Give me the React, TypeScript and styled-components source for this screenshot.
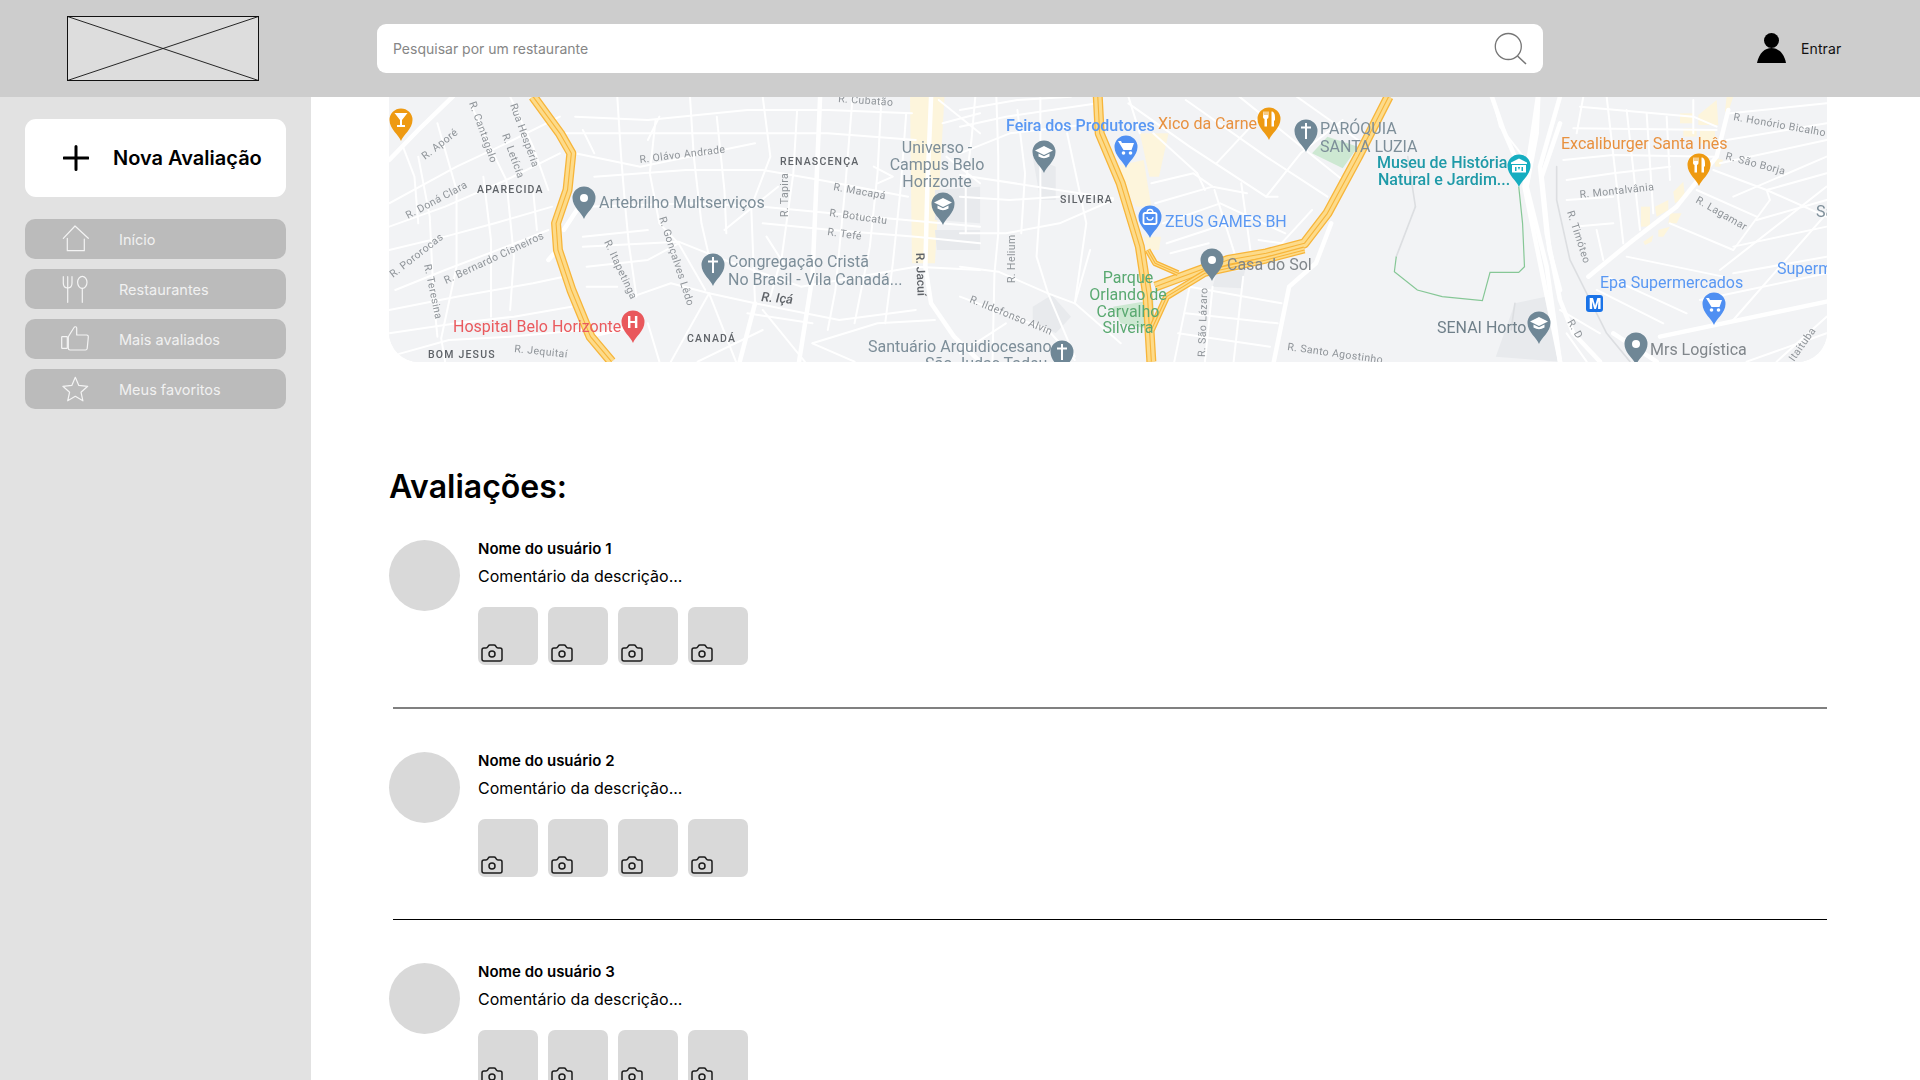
import React from "react";
import styled, { createGlobalStyle } from "styled-components";
import { Camera } from "lucide-react";

const Global = createGlobalStyle`
  html, body { margin: 0; padding: 0; height: 1080px; overflow: hidden; background: #fff; }
  body { font-family: Inter, "Liberation Sans", sans-serif; color: #000; }
  * { box-sizing: border-box; }
`;

const Page = styled.div`
  width: 1920px;
  height: 1080px;
  display: flex;
  flex-direction: column;
  overflow: hidden;
`;

const Header = styled.header`
  flex: none;
  height: 97px;
  background: #cdcdcd;
  display: flex;
  align-items: center;
  padding-left: 67px;
`;

const Logo = styled.svg`
  flex: none;
  width: 192px;
  height: 65px;
  display: block;
`;

const SearchBox = styled.div`
  flex: none;
  width: 1166px;
  height: 49px;
  margin-left: 118px;
  background: #fff;
  border-radius: 9px;
  display: flex;
  align-items: center;
  justify-content: space-between;
  padding: 0 16px;
  font-size: 14px;
  color: #868686;
`;

const SearchIcon = styled.svg`
  width: 36px;
  height: 36px;
  flex: none;
`;

const UserArea = styled.div`
  flex: none;
  margin-left: 214px;
  display: flex;
  align-items: center;
  gap: 14px;
  font-size: 14px;
  letter-spacing: 0.1px;
  color: #111;
`;

const UserIcon = styled.svg`
  width: 30px;
  height: 32px;
  flex: none;
`;

const Body = styled.div`
  flex: 1;
  display: flex;
  min-height: 0;
`;

const Sidebar = styled.aside`
  flex: none;
  width: 311px;
  background: #e2e2e2;
  padding: 22px 25px;
  display: flex;
  flex-direction: column;
  gap: 10px;
`;

const NewButton = styled.div`
  height: 78px;
  margin-bottom: 12px;
  background: #fff;
  border-radius: 11px;
  display: flex;
  align-items: center;
  gap: 24px;
  padding-left: 38px;
  font-size: 20px;
  font-weight: 600;
`;

const PlusIcon = styled.svg`
  width: 26px;
  height: 26px;
  flex: none;
`;

const NavItem = styled.div`
  height: 40px;
  background: #bbbbbb;
  border-radius: 10px;
  display: flex;
  align-items: center;
  gap: 28px;
  padding-left: 36px;
  font-size: 14.5px;
  color: #f1f1f1;
`;

const NavIcon = styled.svg`
  width: 30px;
  height: 30px;
  flex: none;
  fill: none;
  stroke: #f4f4f4;
  stroke-width: 1.2;
  stroke-linejoin: round;
  stroke-linecap: round;
`;

const Main = styled.main`
  flex: 1;
  min-width: 0;
  padding: 0 93px 0 78px;
  overflow: hidden;
`;

const MapFrame = styled.div`
  width: 1438px;
  height: 265px;
  border-radius: 0 0 30px 30px;
  overflow: hidden;
  background: #f2f3f5;
`;

const MapSvg = styled.svg`
  display: block;
  width: 1438px;
  height: 265px;
  filter: blur(0.35px);
`;

const MapLabel = styled.text<{ $color: string; $size: number; $weight?: number; $spacing?: number; $italic?: boolean }>`
  font-family: Roboto, "Liberation Sans", sans-serif;
  fill: ${(p) => p.$color};
  font-size: ${(p) => p.$size}px;
  font-weight: ${(p) => p.$weight ?? 400};
  letter-spacing: ${(p) => p.$spacing ?? 0}px;
  font-style: ${(p) => (p.$italic ? "italic" : "normal")};
`;

const Title = styled.h2`
  margin: 105px 0 34px;
  font-size: 32px;
  line-height: 39px;
  font-weight: 600;
`;

const Review = styled.section`
  display: flex;
  gap: 18px;
`;

const Avatar = styled.div`
  flex: none;
  width: 71px;
  height: 71px;
  border-radius: 50%;
  background: #d9d9d9;
`;

const ReviewBody = styled.div`
  display: flex;
  flex-direction: column;
`;

const UserName = styled.div`
  font-size: 15px;
  line-height: 18px;
  font-weight: 600;
`;

const Comment = styled.div`
  margin-top: 9px;
  font-size: 16px;
  line-height: 19px;
`;

const Photos = styled.div`
  margin-top: 21px;
  display: flex;
  gap: 10px;
`;

const Photo = styled.div`
  width: 60px;
  height: 58px;
  border-radius: 7px;
  background: #d9d9d9;
  display: flex;
  align-items: flex-end;
  padding-left: 2px;
  color: #1c1c1c;
`;

const Divider = styled.hr<{ $soft?: boolean }>`
  border: 0;
  margin: 42px 0 43px 4px;
  height: ${(p) => (p.$soft ? 2 : 1)}px;
  background: ${(p) => (p.$soft ? "#808080" : "#000")};
`;

const Z2 = "translate(380 90) scale(0.3827 0.3333)";
const Z3 = "translate(960 90) scale(0.3827 0.3333)";
const Z4 = "translate(1400 0) scale(0.3333)";

type Roads = { thin: string[]; wide?: string[]; grey?: string[] };

const roadsZ2: Roads = {
  wide: [
    "24,210 100,120 190,20",
    "480,420 520,350",
    "440,510 470,470",
    "1440,20 1430,300 1425,530 1440,640 1500,740 1568,815",
    "980,640 940,815",
    "1150,20 1130,560 1095,815",
    "540,740 660,710",
  ],
  thin: [
    "24,340 200,230 330,160 470,80",
    "24,410 170,350 330,270 470,190",
    "24,480 170,440 300,400 450,350",
    "40,600 170,540 330,470 440,420",
    "24,660 200,620 400,580 480,560",
    "24,730 200,700 350,680 500,650",
    "24,800 180,750 340,740 530,720",
    "150,100 200,300 200,530 160,745 170,815",
    "240,50 300,200 330,270 350,500 340,660",
    "340,20 400,170 440,300",
    "100,200 130,380 140,620 150,740",
    "270,260 290,450 290,680",
    "400,300 410,420",
    "60,170 90,260 100,400",
    "510,80 700,90 960,60 1170,60 1390,70",
    "480,130 750,130 950,130 1170,130 1400,150",
    "510,190 680,230 980,160",
    "560,260 800,240 1000,240 1150,270 1380,320",
    "540,350 820,340 1000,350 1180,370 1568,410",
    "1000,400 1180,420 1400,440 1568,460",
    "530,470 780,455 900,510 1100,590 1400,530 1568,540",
    "540,530 700,510 780,460",
    "530,120 560,190",
    "620,20 630,200 640,340 650,460 670,620",
    "720,90 705,250 730,400 780,460 850,600",
    "810,20 820,200 840,400 860,500",
    "880,80 900,300 905,430",
    "1000,20 1020,200 970,350 980,640",
    "1235,20 1215,300 1190,600 1170,720",
    "1090,60 1080,250 1050,500 1020,620",
    "1310,30 1300,250 1280,470 1240,700",
    "1375,70 1360,300 1340,520 1320,700",
    "660,620 760,580 860,610 980,640 1200,690 1400,660",
    "860,610 760,815",
    "860,610 930,815",
    "1000,660 1110,815",
    "830,815 1000,720",
    "960,670 1130,700",
    "700,700 730,815",
    "1130,760 1300,700 1450,690",
    "1130,760 1240,815",
    "1010,440 1060,530",
    "900,420 1040,290",
    "730,80 700,150",
    "1290,230 1340,260 1300,280",
    "530,440 700,420",
    "540,590 620,590",
    "1480,200 1568,280",
    "1470,100 1568,70",
    "1460,30 1568,130",
  ],
};

const roadsZ3: Roads = {
  wide: [
    "970,400 930,520 860,590 820,815",
    "1510,20 1500,100 1475,290 1530,600 1568,815",
    "1568,100 1520,260 1540,480 1568,600",
    "1390,20 1420,120 1450,200",
  ],
  thin: [
    "0,60 150,30 290,20",
    "0,110 120,80 360,40",
    "0,190 130,130 360,100",
    "0,255 200,290 400,325",
    "0,320 130,330 260,320",
    "0,430 120,430 260,400 400,330",
    "0,530 100,545 230,610 300,640",
    "0,620 230,720 300,810",
    "120,700 0,790",
    "40,20 30,150 15,280 15,430",
    "95,20 100,200 100,430 90,550 85,815",
    "150,60 170,250 160,430",
    "210,20 210,330 200,500 230,610 300,800",
    "280,130 330,400 300,640",
    "340,480 300,640 420,760",
    "440,40 600,170 800,320 830,320",
    "590,30 800,200 960,320",
    "730,20 1000,270",
    "880,20 1040,150",
    "505,130 620,250",
    "500,280 610,250 660,290 750,310",
    "510,340 660,290",
    "530,400 680,340 850,430",
    "540,460 700,400",
    "550,490 650,460",
    "665,300 720,500",
    "735,280 760,490",
    "620,250 640,300",
    "670,220 800,60",
    "800,320 890,190 1000,90",
    "440,20 470,130",
    "600,590 840,640",
    "590,670 830,700",
    "570,730 810,770",
    "660,590 640,815",
    "740,560 715,815",
    "600,590 560,815",
    "840,460 920,360",
    "780,450 900,470",
  ],
  grey: ["1190,350 1140,500", "1170,200 1190,350", "1450,640 1440,720"],
};

const roadsZ4: Roads = {
  wide: [
    "565,830 700,720 830,620 950,470 985,330",
    "780,1010 1280,905",
    "480,290 420,500 440,700 480,900 520,1000 600,1085",
    "415,290 410,400 380,560 440,800 480,1085",
    "640,1000 770,1085",
  ],
  thin: [
    "540,320 880,350 950,380",
    "520,385 950,390",
    "490,480 640,465 950,470",
    "500,540 640,520 810,500",
    "500,600 640,590",
    "520,680 640,670",
    "590,690 610,780",
    "550,290 530,400",
    "620,290 670,730",
    "680,330 720,690",
    "740,340 760,640",
    "800,350 810,540",
    "880,300 880,400",
    "990,340 1280,310",
    "980,420 1280,370",
    "960,490 1280,420",
    "940,510 1100,570 1280,650",
    "890,570 1070,650",
    "810,670 1000,750",
    "680,770 970,830",
    "620,830 860,940",
    "590,870 790,970",
    "1100,570 1280,520",
    "1000,590 1280,470",
    "1070,660 1280,600",
    "1000,740 1280,680",
    "1000,820 1280,770",
    "900,900 1280,820",
    "960,810 1280,560",
    "1000,960 1280,640",
    "1130,1085 1280,950",
    "1100,570 1110,600 1000,750",
    "1040,1085 1280,1000",
    "500,1000 560,1085",
    "480,930 600,1000",
    "280,300 300,380 370,470",
  ],
  grey: ["470,500 470,600 510,780 620,1000 690,1085"],
};

const RoadSet = ({ transform, roads }: { transform: string; roads: Roads }) => (
  <g transform={transform} fill="none" strokeLinejoin="round" strokeLinecap="round">
    {roads.grey?.map((p) => (
      <polyline key={p} points={p} stroke="#dcdee1" strokeWidth={1.6} vectorEffect="non-scaling-stroke" />
    ))}
    {roads.thin.map((p) => (
      <polyline key={p} points={p} stroke="#ffffff" strokeWidth={2} vectorEffect="non-scaling-stroke" />
    ))}
    {roads.wide?.map((p) => (
      <polyline key={p} points={p} stroke="#ffffff" strokeWidth={4.5} vectorEffect="non-scaling-stroke" />
    ))}
  </g>
);

const Highway = ({ transform, d, w = 10 }: { transform: string; d: string; w?: number }) => (
  <g transform={transform} fill="none" strokeLinejoin="round">
    <polyline points={d} stroke="#f7b53a" strokeWidth={w} vectorEffect="non-scaling-stroke" />
    <polyline points={d} stroke="#fddb8a" strokeWidth={w - 2.6} vectorEffect="non-scaling-stroke" />
    <polyline points={d} stroke="#f7b53a" strokeWidth={1.1} vectorEffect="non-scaling-stroke" />
  </g>
);

type Glyph = "dot" | "cross" | "cap" | "cart" | "bag" | "food" | "drink" | "H" | "museum";

const GlyphShape = ({ kind }: { kind: Glyph }) => {
  switch (kind) {
    case "dot":
      return <circle cx="0" cy="0" r="4" fill="#fff" />;
    case "cross":
      return <path d="M-1 -8h2v3.5h4v2h-4V8h-2V-2.5h-4v-2h4z" fill="#fff" />;
    case "cap":
      return <path d="M0 -6 L9 -1.5 L0 3 L-9 -1.5z M-5.5 1.5 L0 4.3 L5.5 1.5 V4.5 Q0 8 -5.5 4.5z" fill="#fff" />;
    case "cart":
      return (
        <g>
          <path d="M-8 -6h3l1 2h12l-2.5 7H-2.500z" fill="#fff" />
          <circle cx="-2.500" cy="6" r="1.800" fill="#fff" />
          <circle cx="4.500" cy="6" r="1.800" fill="#fff" />
        </g>
      );
    case "bag":
      return (
        <g>
          <rect x="-6.500" y="-4" width="13" height="11" rx="1.500" fill="none" stroke="#fff" strokeWidth="1.800" />
          <path d="M-3 -4 a3 3.500 0 0 1 6 0" fill="none" stroke="#fff" strokeWidth="1.500" />
          <path d="M-3 0 a3 3 0 0 0 6 0" fill="none" stroke="#fff" strokeWidth="1.300" />
        </g>
      );
    case "food":
      return (
        <g fill="#fff">
          <path d="M-5.500 -7.500h1v3.500h1v-3.500h1v3.500h1v-3.500h1V-2a2 2 0 0 1 -1.500 2V7.500h-2.500V0a2 2 0 0 1 -1.500 -2z" />
          <path d="M2.500 7.500V-7.500c2.500 0 3.500 2.500 3.500 6V1.500H5V7.500z" />
        </g>
      );
    case "drink":
      return <path d="M-6.500 -7H6.500L1 0V5H4V7H-4V5H-1V0z" fill="#fff" />;
    case "museum":
      return <path d="M0 -7.500 L8 -3.500V-2H-8V-3.500z M-7 -1H7V6.500H-7z M-4 1V5H-2.500V1z M-1.200 1L0 4L1.200 1H-0z M2.500 1V5H4V1z" fill="#fff" fillRule="evenodd" />;
    default:
      return null;
  }
};

const Pin = ({ x, y, color, glyph }: { x: number; y: number; color: string; glyph: Glyph }) => (
  <g transform={`translate(${x} ${y})`}>
    <path d="M0 21 C-2 15 -11.500 9 -11.500 0 A11.500 11.500 0 1 1 11.500 0 C11.500 9 2 15 0 21z" fill={color} />
    {glyph === "H" ? (
      <MapLabel $color="#fff" $size={16} $weight={700} x="-6" y="5.500">
        H
      </MapLabel>
    ) : (
      <GlyphShape kind={glyph} />
    )}
  </g>
);

const SLATE = "#6f8796";
const BLUE = "#4f8ff2";
const ORANGE = "#ee9a12";
const TXT_SLATE = "#7d8e99";
const TXT_GREY = "#80868b";
const TXT_BLUE = "#5a98f3";
const TXT_ORANGE = "#e8913f";
const TXT_GREEN = "#5aa971";
const TXT_TEAL = "#1f9aa8";

const pins: { x: number; y: number; color: string; glyph: Glyph }[] = [
  { x: 401, y: 120, color: ORANGE, glyph: "drink" },
  { x: 584, y: 198, color: SLATE, glyph: "dot" },
  { x: 713, y: 265, color: SLATE, glyph: "cross" },
  { x: 633, y: 322, color: "#e9585c", glyph: "H" },
  { x: 943, y: 204, color: SLATE, glyph: "cap" },
  { x: 1044, y: 152, color: SLATE, glyph: "cap" },
  { x: 1126, y: 147, color: BLUE, glyph: "cart" },
  { x: 1269, y: 119, color: ORANGE, glyph: "food" },
  { x: 1306, y: 131, color: SLATE, glyph: "cross" },
  { x: 1519, y: 166, color: "#15adc0", glyph: "museum" },
  { x: 1150, y: 217, color: BLUE, glyph: "bag" },
  { x: 1212, y: 260, color: SLATE, glyph: "dot" },
  { x: 1539, y: 323, color: SLATE, glyph: "cap" },
  { x: 1062, y: 352, color: SLATE, glyph: "cross" },
  { x: 1699, y: 165, color: ORANGE, glyph: "food" },
  { x: 1714, y: 304, color: BLUE, glyph: "cart" },
  { x: 1636, y: 344, color: SLATE, glyph: "dot" },
];

const placeLabels: { t: string; x: number; y: number; c: string; a?: "middle"; w?: number; s?: number }[] = [
  { t: "Artebrilho Multserviços", x: 599, y: 208, c: TXT_SLATE },
  { t: "Congregação Cristã", x: 728, y: 267, c: TXT_SLATE },
  { t: "No Brasil - Vila Canadá...", x: 728, y: 285, c: TXT_SLATE },
  { t: "Hospital Belo Horizonte", x: 453, y: 332, c: "#ea5a5e" },
  { t: "Universo -", x: 937, y: 153, c: TXT_SLATE, a: "middle" },
  { t: "Campus Belo", x: 937, y: 170, c: TXT_SLATE, a: "middle" },
  { t: "Horizonte", x: 937, y: 187, c: TXT_SLATE, a: "middle" },
  { t: "Santuário Arquidiocesano", x: 868, y: 352, c: TXT_SLATE },
  { t: "São Judas Tadeu", x: 925, y: 369, c: TXT_SLATE },
  { t: "Feira dos Produtores", x: 1006, y: 131, c: TXT_BLUE, w: 500 },
  { t: "Xico da Carne", x: 1158, y: 129, c: TXT_ORANGE },
  { t: "PARÓQUIA", x: 1320, y: 134, c: TXT_SLATE },
  { t: "SANTA LUZIA", x: 1320, y: 152, c: TXT_SLATE },
  { t: "Museu de História", x: 1377, y: 168, c: TXT_TEAL, w: 500 },
  { t: "Natural e Jardim...", x: 1378, y: 185, c: TXT_TEAL, w: 500 },
  { t: "Excaliburger Santa Inês", x: 1561, y: 149, c: TXT_ORANGE },
  { t: "ZEUS GAMES BH", x: 1165, y: 227, c: TXT_BLUE },
  { t: "Casa do Sol", x: 1227, y: 270, c: TXT_GREY },
  { t: "Parque", x: 1128, y: 283, c: TXT_GREEN, a: "middle" },
  { t: "Orlando de", x: 1128, y: 300, c: TXT_GREEN, a: "middle" },
  { t: "Carvalho", x: 1128, y: 317, c: TXT_GREEN, a: "middle" },
  { t: "Silveira", x: 1128, y: 333, c: TXT_GREEN, a: "middle" },
  { t: "SENAI Horto", x: 1437, y: 333, c: "#70808a" },
  { t: "Epa Supermercados", x: 1600, y: 288, c: TXT_BLUE },
  { t: "Superm", x: 1777, y: 274, c: TXT_BLUE },
  { t: "Mrs Logística", x: 1650, y: 355, c: TXT_GREY },
  { t: "Sa", x: 1816, y: 217, c: TXT_SLATE },
];

const districts: { t: string; x: number; y: number }[] = [
  { t: "RENASCENÇA", x: 780, y: 165 },
  { t: "APARECIDA", x: 477, y: 193 },
  { t: "BOM JESUS", x: 428, y: 358 },
  { t: "CANADÁ", x: 687, y: 342 },
  { t: "SILVEIRA", x: 1060, y: 203 },
];

const streets: { t: string; x: number; y: number; r: number }[] = [
  { t: "R. Cubatão", x: 838, y: 102, r: 4 },
  { t: "R. Aporé", x: 425, y: 160, r: -38 },
  { t: "R. Cantagalo", x: 469, y: 103, r: 70 },
  { t: "Rua Hespéria", x: 510, y: 105, r: 70 },
  { t: "R. Letícia", x: 502, y: 135, r: 70 },
  { t: "R. Olávo Andrade", x: 640, y: 163, r: -7 },
  { t: "R. Doná Clara", x: 408, y: 219, r: -28 },
  { t: "R. Pororocas", x: 393, y: 278, r: -38 },
  { t: "R. Teresina", x: 424, y: 265, r: 78 },
  { t: "R. Bernardo Cisneiros", x: 446, y: 284, r: -25 },
  { t: "R. Itapetinga", x: 604, y: 242, r: 65 },
  { t: "R. Gonçalves Lêdo", x: 659, y: 218, r: 72 },
  { t: "R. Tapira", x: 788, y: 217, r: -90 },
  { t: "R. Macapá", x: 833, y: 190, r: 10 },
  { t: "R. Botucatu", x: 829, y: 216, r: 8 },
  { t: "R. Tefé", x: 827, y: 235, r: 8 },
  { t: "R. Jequitaí", x: 514, y: 352, r: 6 },
  { t: "R. Helium", x: 1015, y: 283, r: -90 },
  { t: "R. Ildefonso Alvin", x: 969, y: 302, r: 22 },
  { t: "R. São Lázaro", x: 1205, y: 357, r: -88 },
  { t: "R. Santo Agostinho", x: 1287, y: 350, r: 8 },
  { t: "R. Honório Bicalho", x: 1733, y: 120, r: 10 },
  { t: "R. São Borja", x: 1725, y: 159, r: 15 },
  { t: "R. Montalvânia", x: 1580, y: 198, r: -6 },
  { t: "R. Lagamar", x: 1695, y: 202, r: 30 },
  { t: "R. Timóteo", x: 1567, y: 212, r: 72 },
  { t: "R. D", x: 1567, y: 322, r: 60 },
  { t: "Itaituba", x: 1794, y: 362, r: -55 },
];

const MapView = () => (
  <MapFrame>
    <MapSvg viewBox="389 97 1438 265">
      <rect x="389" y="97" width="1438" height="265" fill="#f2f3f5" />
      <g transform={Z2} fill="#fdf5dc">
        <polygon points="1385,20 1475,20 1450,520 1390,520" />
      </g>
      <g transform={Z2} fill="#e8eaed">
        <polygon points="1450,300 1568,290 1568,400 1450,390" />
        <polygon points="1450,420 1568,420 1568,480 1500,480 1455,480" />
      </g>
      <g transform={Z3}>
        <g fill="#fdf5dc">
          <polygon points="470,130 545,130 520,260 495,260" />
          <polygon points="400,230 480,210 500,350 460,350" />
          <polygon points="480,440 525,440 520,480 490,480" />
        </g>
        <g fill="#e8eaed">
          <polygon points="190,200 250,230 250,330 210,330" />
          <polygon points="190,650 240,615 290,680 250,730 190,690" />
          <polygon points="670,550 745,540 735,595 660,590" />
          <polygon points="1400,800 1450,640 1530,620 1568,815" />
          <polygon points="0,300 40,300 30,390 0,390" />
        </g>
        <g fill="#cde8d2">
          <polygon points="920,190 960,140 1040,170 1000,235" />
          <polygon points="400,650 505,630 510,720 420,700" />
        </g>
      </g>
      <g transform={Z4} fill="#fdf5dc">
        <polygon points="840,340 880,340 880,370 840,370" />
        <polygon points="895,345 950,300 955,375 895,375" />
        <polygon points="850,385 890,385 890,410 850,410" />
        <polygon points="900,390 945,390 945,430 900,430" />
        <polygon points="980,290 1000,290 985,335 975,335" />
        <polygon points="945,475 970,480 960,500 945,500" />
        <polygon points="820,575 850,545 855,590 825,610" />
        <polygon points="765,620 805,600 805,630 770,650" />
        <polygon points="723,620 750,620 750,680 723,680" />
        <polygon points="810,640 845,640 830,670 805,670" />
        <polygon points="775,690 810,680 790,710 775,710" />
        <polygon points="730,725 760,705 755,725 735,735" />
      </g>

      <RoadSet transform={Z2} roads={roadsZ2} />
      <RoadSet transform={Z3} roads={roadsZ3} />
      <RoadSet transform={Z4} roads={roadsZ4} />

      <g transform={Z3} fill="none">
        <polyline
          points="1460,290 1470,400 1475,530 1460,547 1385,547 1365,632 1260,620 1195,600 1135,545 1140,500"
          stroke="#86c796"
          strokeWidth={1.2}
          vectorEffect="non-scaling-stroke"
        />
      </g>

      <Highway transform={Z2} d="400,20 470,130 500,190 490,300 460,400 465,480 500,600 550,740 605,815" />
      <Highway transform={Z3} d="360,20 365,130 420,280 470,470 490,620 500,815" w={10} />
      <Highway transform={Z3} d="1120,20 1040,200 960,370 900,460 800,490 700,510 580,560 510,590" />
      <Highway transform={Z3} d="900,480 800,510 640,550 540,620 500,720" w={7} />
      <Highway transform={Z3} d="490,480 510,520 570,550" w={6} />

      <rect x="1586" y="295" width="17" height="17" rx="3" fill="#1a73e8" />
      <MapLabel $color="#fff" $size={14} $weight={900} x="1589" y="308.500">
        M
      </MapLabel>

      {streets.map((s) => (
        <MapLabel key={s.t} $color="#8f9499" $size={10.5} $spacing={0.4} x={s.x} y={s.y} transform={`rotate(${s.r} ${s.x} ${s.y})`}>
          {s.t}
        </MapLabel>
      ))}
      <MapLabel $color="#5f6368" $size={12} $weight={500} x={916} y={253} transform="rotate(88 916 253)">
        R. Jacuí
      </MapLabel>
      <MapLabel $color="#5f6368" $size={13} $weight={500} $italic x={761} y={301} transform="rotate(5 761 301)">
        R. Içá
      </MapLabel>
      {districts.map((d) => (
        <MapLabel key={d.t} $color="#5f6368" $size={10.5} $weight={500} $spacing={1.2} x={d.x} y={d.y}>
          {d.t}
        </MapLabel>
      ))}
      {placeLabels.map((l) => (
        <MapLabel key={l.t} $color={l.c} $size={l.s ?? 16} $weight={l.w ?? 400} x={l.x} y={l.y} textAnchor={l.a ?? "start"}>
          {l.t}
        </MapLabel>
      ))}
      {pins.map((p) => (
        <Pin key={`${p.x}-${p.y}`} {...p} />
      ))}
    </MapSvg>
  </MapFrame>
);

const navItems = [
  {
    label: "Início",
    icon: (
      <>
        <polyline points="2.300,14.300 14,2 27.300,14.300" />
        <polyline points="6.300,14.300 6.300,26.700 23.300,26.700 23.300,15" />
      </>
    ),
  },
  {
    label: "Restaurantes",
    icon: (
      <>
        <path d="M2.300 2.700V9C2.300 12 4 14 6.700 14C9.300 14 11 12 11 9V2.700" />
        <path d="M6.700 2.700V28.300" />
        <ellipse cx="21.300" cy="8.300" rx="4.700" ry="6" />
        <path d="M21.300 14.300V28.300" />
      </>
    ),
  },
  {
    label: "Mais avaliados",
    icon: (
      <>
        <rect x="0.700" y="12.700" width="5.600" height="11.600" rx="0.600" />
        <path d="M7.300 12.700L13 3.500C13.500 2.500 15.700 2.300 15.700 4V11H25.700C26.800 11 27.500 12 27.300 13.300L26.200 24.500C26 25.500 25.500 26 24.500 26H9C8 26 7.300 25.300 7.300 24.300Z" />
      </>
    ),
  },
  {
    label: "Meus favoritos",
    icon: <polygon points="14.300,3.300 17.800,11.400 26.700,12.300 20,18.200 21.900,26.800 14.300,22.300 6.700,26.800 8.600,18.200 1.900,12.300 10.800,11.400" />,
  },
];

const ReviewRow = ({ n }: { n: number }) => (
  <Review>
    <Avatar />
    <ReviewBody>
      <UserName>Nome do usuário {n}</UserName>
      <Comment>Comentário da descrição...</Comment>
      <Photos>
        {[0, 1, 2, 3].map((i) => (
          <Photo key={i}>
            <Camera size={24} strokeWidth={1.5} />
          </Photo>
        ))}
      </Photos>
    </ReviewBody>
  </Review>
);

export default function App() {
  return (
    <Page>
      <Global />
      <Header>
        <Logo viewBox="0 0 192 65">
          <rect x="0.500" y="0.500" width="191" height="64" fill="#dddddd" stroke="#111" />
          <path d="M0.500 0.500L191.500 64.500M191.500 0.500L0.500 64.500" stroke="#111" strokeWidth="0.900" />
        </Logo>
        <SearchBox>
          <span>Pesquisar por um restaurante</span>
          <SearchIcon viewBox="0 0 36 36" fill="none" stroke="#767676" strokeWidth="1.300">
            <circle cx="17.300" cy="15.500" r="13" />
            <path d="M26.500 25L35 33" strokeWidth="1.500" />
          </SearchIcon>
        </SearchBox>
        <UserArea>
          <UserIcon viewBox="0 0 30 32" fill="#000">
            <circle cx="14.500" cy="7.500" r="7.500" />
            <path d="M0 30C2 20 8 15 14.500 15C21 15 27 20 29 30Z" />
          </UserIcon>
          <span>Entrar</span>
        </UserArea>
      </Header>
      <Body>
        <Sidebar>
          <NewButton>
            <PlusIcon viewBox="0 0 26 26" stroke="#000" strokeWidth="3" strokeLinecap="round">
              <path d="M13 1.500V24.500M1 13H25" />
            </PlusIcon>
            Nova Avaliação
          </NewButton>
          {navItems.map((it) => (
            <NavItem key={it.label}>
              <NavIcon viewBox="0 0 30 30">{it.icon}</NavIcon>
              {it.label}
            </NavItem>
          ))}
        </Sidebar>
        <Main>
          <MapView />
          <Title>Avaliações:</Title>
          <ReviewRow n={1} />
          <Divider $soft />
          <ReviewRow n={2} />
          <Divider />
          <ReviewRow n={3} />
        </Main>
      </Body>
    </Page>
  );
}
